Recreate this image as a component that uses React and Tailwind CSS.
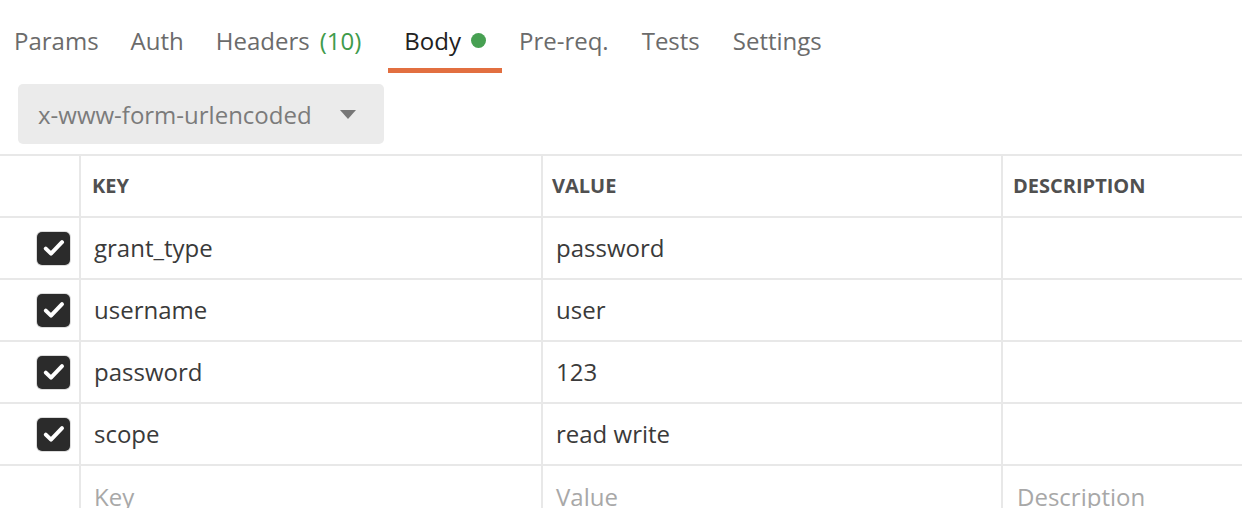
import React from 'react'

const tabs = [
    { label: 'Params' },
    { label: 'Auth' },
    { label: 'Headers', count: '(10)' },
    { label: 'Body', active: true, dot: true },
    { label: 'Pre-req.' },
    { label: 'Tests' },
    { label: 'Settings' },
]

const rows = [
    { key: 'grant_type', value: 'password' },
    { key: 'username', value: 'user' },
    { key: 'password', value: '123' },
    { key: 'scope', value: 'read write' },
]

const Checkbox = () => (
    <div className='w-[33px] h-[33px] rounded-[5px] bg-[#2b2b2b] shadow-[0_0_0_1px_#dcdcdc] flex items-center justify-center'>
        <svg width="24" height="24" viewBox="0 0 24 24">
            <path d="M3.8 12.6 L9 17.6 L20 6.2" fill="none" stroke="white" strokeWidth="4" strokeLinecap="round" strokeLinejoin="round" />
        </svg>
    </div>
)

const App = () => {
    return (
        <div className='w-[1242px] h-[508px] overflow-hidden bg-white font-["Open_Sans",sans-serif]'>
            {/* tabs */}
            <div className='flex items-end pt-[24px] ml-[-2px]'>
                {tabs.map((tab, i) => (
                    <div
                        key={tab.label}
                        className={
                            tab.active
                                ? 'flex items-center px-4 ml-[11px] text-[24px] leading-[33px] pb-[11px] border-b-[5px] border-[#e26f40] text-[#212121]'
                                : i > 3
                                    ? 'flex items-center px-4 ml-[1px] text-[24px] leading-[33px] pb-[11px] border-b-[5px] border-transparent text-[#6b6b6b]'
                                    : 'flex items-center px-4 text-[24px] leading-[33px] pb-[11px] border-b-[5px] border-transparent text-[#6b6b6b]'
                        }
                    >
                        <span>{tab.label}</span>
                        {tab.count && <span className='ml-[10px] text-[#3f9b4b]'>{tab.count}</span>}
                        {tab.dot && <span className='ml-[10px] w-[15px] h-[15px] rounded-full bg-[#47a052]'></span>}
                    </div>
                ))}
            </div>

            {/* body type dropdown */}
            <div className='mt-[11px] ml-[18px] w-[366px] h-[60px] rounded-[5px] bg-[#ebebeb] flex items-center justify-between pl-[20px] pr-[28px]'>
                <span className='text-[24px] text-[#7b7b7b] pt-[1px]'>x-www-form-urlencoded</span>
                <svg width="16" height="9" viewBox="0 0 16 9">
                    <path d="M0 0 H16 L8 9 Z" fill="#777777" />
                </svg>
            </div>

            {/* key / value table */}
            <div className='mt-[10px] border-t-2 border-[#e8e8e8]'>
                <div className='flex h-[62px] border-b-2 border-[#e8e8e8] text-[20px] font-bold text-[#505050]'>
                    <div className='w-[81px] border-r-2 border-[#e8e8e8]'></div>
                    <div className='w-[462px] border-r-2 border-[#e8e8e8] flex items-center pl-[11px]'>KEY</div>
                    <div className='w-[460px] border-r-2 border-[#e8e8e8] flex items-center pl-[9px]'>VALUE</div>
                    <div className='flex-1 flex items-center pl-[10px]'>DESCRIPTION</div>
                </div>

                {rows.map((row) => (
                    <div key={row.key} className='flex h-[62px] border-b-2 border-[#e8e8e8] text-[24px] text-[#3a3a3a]'>
                        <div className='w-[81px] border-r-2 border-[#e8e8e8] flex items-center justify-end pr-[9px]'>
                            <Checkbox />
                        </div>
                        <div className='w-[462px] border-r-2 border-[#e8e8e8] flex items-center pl-[13px]'>{row.key}</div>
                        <div className='w-[460px] border-r-2 border-[#e8e8e8] flex items-center pl-[13px]'>{row.value}</div>
                        <div className='flex-1'></div>
                    </div>
                ))}

                <div className='flex h-[62px] text-[24px] text-[#a8a8a8]'>
                    <div className='w-[81px] border-r-2 border-[#e8e8e8]'></div>
                    <div className='w-[462px] border-r-2 border-[#e8e8e8] flex items-center pl-[13px]'>Key</div>
                    <div className='w-[460px] border-r-2 border-[#e8e8e8] flex items-center pl-[13px]'>Value</div>
                    <div className='flex-1 flex items-center pl-[14px]'>Description</div>
                </div>
            </div>
        </div>
    )
}

export default App
